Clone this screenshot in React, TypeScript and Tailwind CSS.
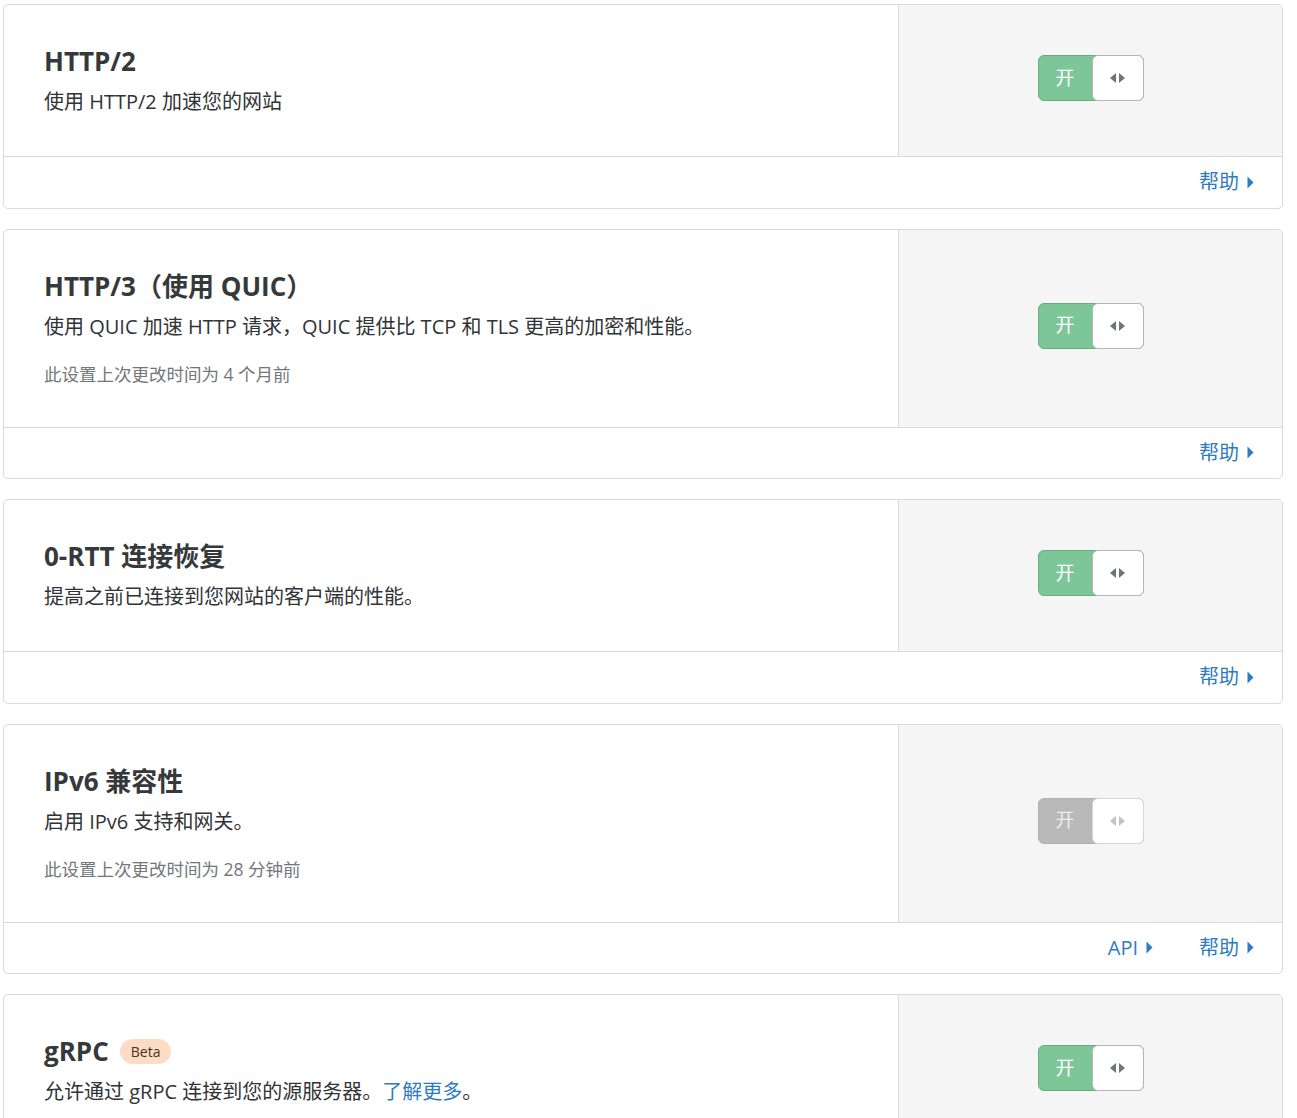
import type { ReactNode } from 'react';

type Setting = {
  title: ReactNode;
  description: ReactNode;
  changed?: string;
  enabled: boolean;
  api?: boolean;
};

const font = { fontFamily: '"Open Sans", "Noto Sans CJK SC", sans-serif' };

const Caret = () => (
  <svg width="7" height="13" viewBox="0 0 7 13" className="ml-2 inline-block" aria-hidden>
    <path d="M0.5 0.5 L6.5 6.5 L0.5 12.5 Z" fill="currentColor" />
  </svg>
);

const FooterLink = ({ children }: { children: ReactNode }) => (
  <a href="#" className="inline-flex items-center text-[20px] text-[#2f7bbf] hover:underline">
    {children}
    <Caret />
  </a>
);

// segmented on/off switch with a white handle on the right
const Toggle = ({ on }: { on: boolean }) => (
  <div
    className={
      on
        ? 'relative flex h-[46px] w-[106px] rounded-[6px] border border-[#66ad80] bg-[#7dc698]'
        : 'relative flex h-[46px] w-[106px] rounded-[6px] border border-[#b0b0b0] bg-[#b9b9b9]'
    }
  >
    <span
      className={
        on
          ? 'flex w-[53px] items-center justify-center text-[19px] text-white'
          : 'flex w-[53px] items-center justify-center text-[19px] text-[#ececec]'
      }
    >
      开
    </span>
    <span
      className={
        on
          ? '-my-px -mr-px flex flex-1 items-center justify-center gap-[3px] rounded-[6px] border border-[#b3b8b5] bg-white text-[#6f7478]'
          : '-my-px -mr-px flex flex-1 items-center justify-center gap-[3px] rounded-[6px] border border-[#d6d6d6] bg-white text-[#c4c4c4]'
      }
    >
      <svg width="6" height="10" viewBox="0 0 6 10" aria-hidden>
        <path d="M6 0 L0 5 L6 10 Z" fill="currentColor" />
      </svg>
      <svg width="6" height="10" viewBox="0 0 6 10" aria-hidden>
        <path d="M0 0 L6 5 L0 10 Z" fill="currentColor" />
      </svg>
    </span>
  </div>
);

const SettingCard = ({ s }: { s: Setting }) => (
  <div className="overflow-hidden rounded-[5px] border border-[#d9d9d9] bg-white">
    <div className="flex">
      <div className="flex-1 px-10 py-10">
        <h3 className="flex items-center text-[26px] font-bold leading-[33px] text-[#36393a]">{s.title}</h3>
        <p className="mt-[9px] text-[20px] leading-[29px] text-[#313335]">{s.description}</p>
        {s.changed && (
          <p className="mt-5 text-[17.5px] leading-[26px] text-[#72777c]">{s.changed}</p>
        )}
      </div>
      <div className="flex w-[384px] items-center justify-center border-l border-[#d9d9d9] bg-[#f5f5f5] pb-[5px]">
        <Toggle on={s.enabled} />
      </div>
    </div>
    <div className="flex h-[51.5px] items-center justify-end gap-[46px] border-t border-[#d9d9d9] pr-[28px]">
      {s.api && <FooterLink>API</FooterLink>}
      <FooterLink>帮助</FooterLink>
    </div>
  </div>
);

const settings: Setting[] = [
  { title: 'HTTP/2', description: '使用 HTTP/2 加速您的网站', enabled: true },
  {
    title: 'HTTP/3（使用 QUIC）',
    description: '使用 QUIC 加速 HTTP 请求，QUIC 提供比 TCP 和 TLS 更高的加密和性能。',
    changed: '此设置上次更改时间为 4 个月前',
    enabled: true,
  },
  { title: '0-RTT 连接恢复', description: '提高之前已连接到您网站的客户端的性能。', enabled: true },
  {
    title: 'IPv6 兼容性',
    description: '启用 IPv6 支持和网关。',
    changed: '此设置上次更改时间为 28 分钟前',
    enabled: false,
    api: true,
  },
  {
    title: (
      <>
        gRPC
        <span className="ml-[11px] rounded-full bg-[#fcdcc4] px-[11px] text-[14px] font-normal leading-[25px] text-[#4a3222]">
          Beta
        </span>
      </>
    ),
    description: (
      <>
        允许通过 gRPC 连接到您的源服务器。
        <a href="#" className="text-[#2f7bbf]">
          了解更多
        </a>
        。
      </>
    ),
    enabled: true,
  },
];

export default function App() {
  return (
    <div className="min-h-screen bg-white pt-1" style={font}>
      <div className="ml-[3px] flex w-[1280px] flex-col gap-5">
        {settings.map((s, i) => (
          <SettingCard key={i} s={s} />
        ))}
      </div>
    </div>
  );
}
